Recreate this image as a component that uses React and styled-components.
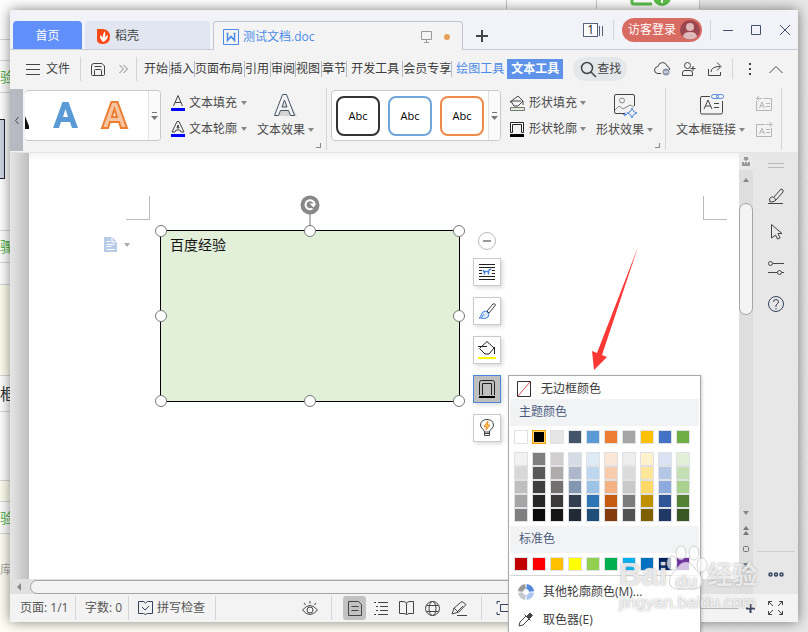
import React from "react";
import styled, { createGlobalStyle } from "styled-components";

const Global = createGlobalStyle`
  * { box-sizing: border-box; }
  body { margin: 0; font: 12px/16px "Open Sans", "Noto Sans CJK SC", sans-serif; color: #444; }
  button { font: inherit; color: inherit; background: none; border: 0; padding: 0; margin: 0; white-space: nowrap; }
  svg { display: block; flex: none; overflow: visible; }
`;

/* ---------- desktop behind the window ---------- */
const Desktop = styled.div`
  position: relative; min-height: 100vh; padding: 10px; overflow: hidden; display: flex;
`;
const Backdrop = styled.div`
  position: absolute; inset: 0; display: grid; grid-template-columns: 1fr 108px; background: #fffff6;
`;
const Wallpaper = styled.div`
  background: repeating-linear-gradient(45deg, #e5e5e5 0 1px, #e9e9e9 1px 3px);
`;
const PageBehind = styled.div`display: flex; flex-direction: column;`;
const BehindRow = styled.div`
  flex: none; height: ${p => p.$h}px; background: ${p => p.$bg || "#fff"};
  border-bottom: 1px solid ${p => p.$line || "#d8d8d8"}; display: flex; align-items: center;
`;
const Clip = styled.span`
  width: 10px; overflow: hidden; white-space: nowrap; line-height: 20px;
  color: ${p => p.$color}; font-size: ${p => p.$size || 14}px;
`;
const Thumb = styled.span`width: 5px; height: 60px; border: 1px solid #223; border-left: 0; background: #cdd5e2;`;
const Columns = styled.div`
  width: 100%; height: 100%; display: grid; grid-template-columns: 507px 90px 1fr;
  > * { border-right: 1px solid #c8c8c8; }
`;
const Badge = styled.div`padding-left: 33px; overflow: hidden;`;

/* ---------- window ---------- */
const Window = styled.main`
  position: relative; flex: 1; min-width: 0; display: flex; flex-direction: column;
  background: #f3f3f3; box-shadow: 0 0 12px rgba(0,0,0,.5);
`;
const TitleBar = styled.header`
  height: 40px; flex: none; display: flex; align-items: flex-end; padding-left: 3px;
  background: #f2f3f8; border-bottom: 1px solid #c8cdd8;
`;
const Tab = styled.button`
  height: 28px; width: ${p => p.$w}px; display: flex; align-items: center; gap: 5px; margin-right: 3px;
  padding: 2px 0 0 12px; border-radius: 4px 4px 0 0; background: #e1e6f0;
`;
const HomeTab = styled(Tab)`background: #618ffb; color: #fff; justify-content: center; padding: 2px 0 0;`;
const ActiveTab = styled(Tab)`
  height: 29px; margin: 0 0 -1px; padding: 2px 12px 0 9px; gap: 4px; background: #f4f4f4; color: #4b8bea;
  border: 1px solid #bfc5d3; border-bottom: 0;
`;
const Spacer = styled.span`flex: 1;`;
const Gap = styled.span`flex: none; width: ${p => p.$w}px;`;
const Dot = styled.span`width: 6px; height: 6px; border-radius: 50%; background: #e8a158; margin-left: 8px;`;
const NewTab = styled.button`height: 28px; margin-left: 13px;`;
const WindowTools = styled.div`height: 39px; display: flex; align-items: center; padding-right: 8px;`;
const Counter = styled.button`
  width: 21px; height: 14px; display: flex; color: #112; line-height: 12px;
  > b { width: 17px; height: 14px; border: 1px solid #56617e; font-weight: 400; background: #fff; }
  > i { width: 2px; height: 10px; margin: 3px 0 0 1px; border-left: 1px solid #56617e; }
`;
const Rule = styled.span`flex: none; width: 1px; height: ${p => p.$h || 20}px; background: #d4d6dc;`;
const Login = styled.button`
  width: 80px; height: 24px; border-radius: 12px; background: #d96c62; color: #fff;
  display: flex; align-items: center; justify-content: space-between; padding: 0 2px 0 6px;
`;

/* ---------- menu row ---------- */
const MenuBar = styled.nav`height: 38px; flex: none; display: flex; align-items: center; padding: 0 15px 0 16px;`;
const FileButton = styled.button`display: flex; align-items: center; gap: 6px; margin-right: 10px;`;
const MenuItem = styled.button`
  height: 16px; flex: none; padding: 0 ${p => p.$r || 0}px 0 ${p => p.$l || 0}px;
  border-right: 1px solid ${p => (p.$plain ? "transparent" : "#b4bac8")};
  color: ${p => (p.$accent ? "#4b8bea" : "#3c3c3c")};
`;
const SelectedItem = styled.button`height: 20px; width: 56px; margin: 0 10px 0 2px; background: #5f93ea; color: #fff; font-weight: 700;`;
const Find = styled.button`
  width: 54px; height: 24px; border-radius: 12px; background: #e5e8ea;
  display: flex; align-items: center; gap: 1px; padding-left: 8px;
`;

/* ---------- ribbon ---------- */
const Ribbon = styled.section`
  height: 65px; flex: none; display: flex; align-items: flex-start; border-bottom: 1px solid #e4e4e4;
`;
const Collapse = styled.button`width: 13px; height: 62px; margin-top: 1px; background: #b7bac2; display: grid; place-items: center;`;
const Gallery = styled.div`
  height: 51px; margin-top: 2px; display: flex; align-items: center; background: #fff; overflow: hidden;
  border: 1px solid #c9c9c9; border-radius: 4px; padding-left: ${p => p.$l || 0}px;
  border-left-width: ${p => (p.$open ? 0 : 1)}px;
`;
const GalleryMore = styled.button`
  width: 12px; height: 49px; margin-left: ${p => p.$l}px; border-left: 1px solid #e2e2e2; background: #fafafa;
  display: grid; place-items: center;
`;
const StyleTile = styled.button`
  width: 44px; height: 40px; margin-right: 8px; border: 2px solid ${p => p.$c}; border-radius: 8px;
  background: #fff; color: #000; font: 11px/16px "Open Sans", sans-serif;
  &:nth-child(3) { margin-right: 0; }
`;
const CommandPair = styled.div`display: flex; flex-direction: column; gap: 6px; padding-top: 5px;`;
const Command = styled.button`
  height: 20px; display: flex; align-items: center; gap: ${p => p.$gap || 4}px; color: #4a4a4a;
`;
const BigCommand = styled.button`
  padding-top: 6px; display: flex; flex-direction: column; align-items: center; gap: 5px; color: #4a4a4a;
`;
const BigLabel = styled.span`display: flex; align-items: center; gap: 3px;`;
const Corner = styled.i`width: 5px; height: 5px; margin: 55px 5px 0 2px; border: solid #888; border-width: 0 1px 1px 0;`;

/* ---------- document ---------- */
const Workspace = styled.section`flex: 1; display: flex; min-height: 441px;`;
const DocColumn = styled.div`flex: 1; min-width: 0; display: flex; flex-direction: column;`;
const Canvas = styled.div`flex: 1; display: flex;`;
const Gutter = styled.div`width: 19px; background: linear-gradient(90deg, #e6e6e6, #bfbfbf);`;
const Paper = styled.div`position: relative; flex: 1; background: linear-gradient(#f4f4f4, #fff 8px);`;
const Margin = styled.i`
  position: absolute; top: 43px; left: ${p => p.$x}px; width: 24px; height: 24px; border: solid #bbb;
  border-width: ${p => (p.$right ? "0 0 1px 1px" : "0 1px 1px 0")};
`;
const ParagraphTool = styled.button`position: absolute; left: 75px; top: 84px; display: flex; align-items: center; gap: 6px;`;
const TextBox = styled.div`
  position: absolute; left: 131px; top: 77px; width: 300px; height: 172px; background: #e2efd9;
  border: 1px solid #000; padding: 4px 9px; color: #111; font-size: 14px; line-height: 20px;
`;
const Handle = styled.i`
  position: absolute; left: ${p => p.$x}; top: ${p => p.$y}; width: 12px; height: 12px; margin: -6px;
  border-radius: 50%; background: #fff; border: 1px solid #777;
`;
const Rotate = styled.button`position: absolute; left: 50%; bottom: 100%; transform: translateX(-50%);`;
const FloatTools = styled.div`
  position: absolute; left: 444px; top: 79px; display: flex; flex-direction: column; align-items: center; gap: 11px;
  > :first-child { margin-bottom: -3px; }
`;
const FloatButton = styled.button`
  width: 28px; height: 28px; display: grid; place-items: center; box-shadow: 2px 2px 4px rgba(0,0,0,.14);
  background: ${p => (p.$on ? "#bfbfbf" : "#fff")}; border: 1px solid ${p => (p.$on ? "#4a86d8" : "#cacaca")};
`;
const HScroll = styled.div`height: 15px; flex: none; display: flex; align-items: center; gap: 8px; padding-left: 6px; background: #e0e0e0;`;
const HThumb = styled.span`flex: 0 1 640px; height: 14px; border: 1px solid #a5a5a5; border-radius: 7px; background: #f4f4f4;`;
const VScroll = styled.div`width: 14px; flex: none; display: flex; flex-direction: column; align-items: center; background: #dedede; padding-bottom: 22px; gap: 11px;`;
const Splitter = styled.span`width: 14px; height: 17px; margin-bottom: -3px; background: #e9e9e9; display: grid; place-items: center;`;
const VThumb = styled.span`width: 14px; height: 112px; margin-top: 10px; border: 1px solid #a5a5a5; border-radius: 7px; background: #f4f4f4;`;
const SideBar = styled.aside`
  width: 45px; flex: none; display: flex; flex-direction: column; align-items: center; gap: 20px;
  padding: 10px 0 17px; background: #e7e7e7;
`;
const SideLine = styled.i`width: 38px; height: 1px; background: #cfcfcf;`;

/* ---------- status bar ---------- */
const StatusBar = styled.footer`height: 28px; flex: none; display: flex; align-items: center; padding: 0 15px 0 10px; color: #555;`;
const StatusText = styled.span`white-space: nowrap; width: ${p => p.$w}px;`;
const SpellButton = styled.button`display: flex; align-items: center; gap: 4px; margin: 0 10px 0 9px;`;
const ViewButton = styled.button`
  width: 23px; height: 24px; margin-right: 3px; display: grid; place-items: center; border-radius: 3px;
  background: ${p => (p.$on ? "#c2c2c2" : "transparent")};
`;
const Zoom = styled.input`
  appearance: none; width: 90px; height: 1px; margin: 0 8px 0 0; background: #bbb;
  &::-webkit-slider-thumb { appearance: none; width: 7px; height: 11px; background: #888; }
`;

/* ---------- colour menu ---------- */
const Menu = styled.div`
  position: absolute; z-index: 2; left: 479px; top: 222px; width: 193px; padding: 2px 1px 12px; background: #fff;
  border: 1px solid #a9a9a9; box-shadow: 1px 1px 3px rgba(0,0,0,.2); color: #3c3c3c;
`;
const MenuRow = styled.button`width: 100%; height: ${p => p.$h || 28}px; display: flex; align-items: center; gap: ${p => p.$gap || 10}px; padding-left: ${p => p.$l || 7}px;`;
const Heading = styled.h3`margin: 0; height: 27px; padding: 5px 9px; background: #f1f3f5; color: #4c5b7c; font: inherit;`;
const Swatches = styled.div`display: grid; grid-template-columns: repeat(10, 14px); column-gap: 4px; padding: ${p => p.$pad};`;
const Swatch = styled.button`
  width: 14px; height: 14px; background: ${p => p.$c}; border: 1px solid ${p => (p.$on ? "#f5a000" : "#e0e1e5")};
  box-shadow: ${p => (p.$on ? "inset 0 0 0 1px #ffd873" : "none")};
`;
const MenuLine = styled.hr`margin: 0; border: 0; border-top: 1px solid #d5d5d5;`;
const Pointer = styled.svg`position: absolute; left: 562px; top: 94px;`;

/* ---------- watermark ---------- */
const Watermark = styled.div`
  position: absolute; z-index: 3; left: 619px; top: 545px; pointer-events: none; color: rgba(255,255,255,.75);
  font-family: "Liberation Sans", "Noto Sans CJK SC", sans-serif; font-weight: 700; white-space: nowrap;
  text-shadow: 0 0 2px rgba(150,150,150,.9);
`;
const Brand = styled.div`display: flex; align-items: flex-end; height: 48px;`;
const BrandText = styled.span`font-size: ${p => p.$s}px; line-height: 36px; padding-left: ${p => p.$l || 0}px;`;
const Paw = styled.span`width: 37px; height: 48px; display: grid; > * { grid-area: 1 / 1; }`;
const PawText = styled.span`padding: 27px 0 0 8px; font-size: 18px; line-height: 20px;`;
const Site = styled.div`font-size: 17px; line-height: 20px; font-weight: 400;`;

const Ico = ({ w = 16, h = 16, c = "#444", sw = 1, fill = "none", children }) => (
  <svg width={w} height={h} viewBox={`0 0 ${w} ${h}`} fill={fill} stroke={c} strokeWidth={sw} aria-hidden="true">{children}</svg>
);
const Caret = ({ up, left, c = "#888" }) => (
  <Ico w={6} h={4} c="none" fill={c}>
    <path d={left ? "M5-2v8L1 2z" : up ? "M0 4h6L3 0z" : "M0 0h6L3 4z"} />
  </Ico>
);
const More = () => <Ico w={7} h={8} c="#777"><path d="M1 .5h5" /><path d="M0 4h7L3.500 8z" fill="#777" stroke="none" /></Ico>;

const theme = ["#fff", "#000", "#e7e6e6", "#44546a", "#5b9bd5", "#ed7d31", "#a5a5a5", "#ffc000", "#4472c4", "#70ad47"];
const tints = [
  ["#f2f2f2", "#7f7f7f", "#d0cece", "#d6dce5", "#deebf7", "#fbe5d6", "#ededed", "#fff2cc", "#dae3f3", "#e2f0d9"],
  ["#d8d8d8", "#595959", "#afabab", "#adb9ca", "#bdd7ee", "#f8cbad", "#dbdbdb", "#ffe699", "#b4c7e7", "#c5e0b4"],
  ["#bfbfbf", "#3f3f3f", "#757070", "#8497b0", "#9dc3e6", "#f4b183", "#c9c9c9", "#ffd966", "#8faadc", "#a9d18e"],
  ["#a5a5a5", "#262626", "#3a3838", "#333f50", "#2e75b6", "#c55a11", "#7b7b7b", "#bf9000", "#2f5597", "#548235"],
  ["#7f7f7f", "#0c0c0c", "#171616", "#222a35", "#1f4e79", "#843c0c", "#525252", "#7f6000", "#203864", "#385723"],
];
const standard = ["#c00000", "#f00", "#ffc000", "#ff0", "#92d050", "#00b050", "#00b0f0", "#0070c0", "#002060", "#7030a0"];

function Behind() {
  return (
    <Backdrop aria-hidden="true">
      <PageBehind>
        <BehindRow $h={10} $line="#fff"><Columns><i /><i /><Badge>
          <Ico w={40} h={8} c="#5bc04a" sw={3}><path d="M2-4V2Q2 4 4 4H22" /><circle cx="32" cy="-3" r="9" fill="#5bc04a" stroke="none" /><path d="M32-5V3" stroke="#fff" strokeWidth="2" /></Ico>
        </Badge></Columns></BehindRow>
        <BehindRow $h={30} />
        <BehindRow $h={21} />
        <BehindRow $h={32}><Clip $color="#4fb548">验</Clip></BehindRow>
        <BehindRow $h={112} $line="#fff"><Thumb /></BehindRow>
        <BehindRow $h={26} />
        <BehindRow $h={32}><Clip $color="#4fb548">骤</Clip></BehindRow>
        <BehindRow $h={22} />
        <BehindRow $h={91} $bg="#fffff0" />
        <BehindRow $h={36}><Clip $color="#333" $size={16}>框</Clip></BehindRow>
        <BehindRow $h={69} />
        <BehindRow $h={21} $bg="#fffff0" />
        <BehindRow $h={32}><Clip $color="#4fb548">验</Clip></BehindRow>
        <BehindRow $h={72} $bg="#fffff6" $line="#fffff6"><Clip $color="#aaa" $size={12}>库</Clip></BehindRow>
      </PageBehind>
      <Wallpaper />
    </Backdrop>
  );
}

function Title() {
  return (
    <TitleBar>
      <HomeTab $w={69}>首页</HomeTab>
      <Tab $w={125}>
        <Ico w={13} h={15} c="none"><path d="M0 0H6Q13 1 13 7.500Q13 15 6 15Q0 15 0 11z" fill="#fb4a16" /><path d="M6 13Q2 9 3.500 6Q6 8 6 10Q5 6 8 2Q9 6 7.500 10Q8 7 11 6Q11 11 6 13" fill="#fff" /></Ico>
        稻壳
      </Tab>
      <ActiveTab $w={250}>
        <Ico w={16} h={16} c="#4b8bea"><path d="M.5.5h15v15H.5z" /><path d="M3.500 4.500h2M10.500 4.500h2M4.500 4.500v7L8 7.500l3.500 4v-7" strokeWidth="1.500" /></Ico>
        测试文档.doc
        <Spacer />
        <Ico w={11} h={12} c="#999"><path d="M.5.5h10v8H.5zM5.500 8.500v3M3 11.500h5" /></Ico>
        <Dot />
      </ActiveTab>
      <NewTab aria-label="新建标签"><Ico w={12} h={28} c="#444" sw={2}><path d="M6 9v12M0 15h12" /></Ico></NewTab>
      <Spacer />
      <WindowTools>
        <Counter><b>1</b><i /><i /></Counter>
        <Gap $w={9} /><Rule /><Gap $w={8} />
        <Login>访客登录
          <Ico w={20} h={20} c="none"><circle cx="10" cy="10" r="10" fill="#9c4750" /><circle cx="10" cy="7" r="4" fill="#e0b9bb" /><path d="M3 17Q3 12 10 12Q17 12 17 17Q10 22 3 17" fill="#e0b9bb" /></Ico>
        </Login>
        <Gap $w={8} /><Rule /><Gap $w={12} />
        <button aria-label="最小化"><Ico w={10} h={10} c="#44516e"><path d="M0 5.500h10" /></Ico></button><Gap $w={18} />
        <button aria-label="最大化"><Ico w={10} h={10} c="#44516e"><path d="M.5.5h9v9h-9z" /></Ico></button><Gap $w={19} />
        <button aria-label="关闭"><Ico w={10} h={10} c="#44516e"><path d="M0 0l10 10M10 0L0 10" /></Ico></button>
      </WindowTools>
    </TitleBar>
  );
}

function TopMenu() {
  return (
    <MenuBar>
      <FileButton><Ico w={14} h={11}><path d="M0 .5h14M0 5.500h14M0 10.500h14" /></Ico>文件</FileButton>
      <Rule $h={24} /><Gap $w={10} />
      <button aria-label="保存"><Ico w={14} h={13}><path d="M.5 3Q.5.500 3 .5h8l2.500 2.500v8.500q0 1-1 1h-11q-1 0-1-1zM3.500 3.500h7M3.500 12V7.500q0-1 1-1h5q1 0 1 1V12" /></Ico></button>
      <Gap $w={14} /><Ico w={9} h={8} c="#888"><path d="M.5 0l4 4l-4 4M4.500 0l4 4l-4 4" /></Ico><Gap $w={8} />
      <Rule $h={24} /><Gap $w={7} />
      <MenuItem $r={1}>开始</MenuItem><MenuItem>插入</MenuItem><MenuItem $r={1}>页面布局</MenuItem>
      <MenuItem $r={1}>引用</MenuItem><MenuItem>审阅</MenuItem><MenuItem $r={1}>视图</MenuItem><MenuItem>章节</MenuItem>
      <MenuItem $l={4} $r={3}>开发工具</MenuItem><MenuItem>会员专享</MenuItem>
      <MenuItem $l={4} $accent $plain>绘图工具</MenuItem>
      <SelectedItem>文本工具</SelectedItem>
      <Find><Ico w={15} h={15} sw={1.5}><circle cx="6" cy="6" r="5.500" /><path d="M10 10l5 5" /></Ico>查找</Find>
      <Spacer />
      <button aria-label="云"><Ico w={17} h={14}><path d="M7 11.500H4Q.5 11.500.5 8Q.5 5 4 4.500Q5 .5 8.500.5Q12 .5 13 4Q16 5 15.500 8" /><circle cx="12" cy="10" r="3.500" fill="#8e98ae" stroke="none" /><path d="M10 10h4" stroke="#fff" /></Ico></button><Gap $w={11} />
      <button aria-label="协作"><Ico w={14} h={14}><circle cx="5.500" cy="3.500" r="3" /><path d="M.5 13.500V11Q.5 8.500 3 8.500h5q2.500 0 2.500 2.500v2.500zM8.500 6.500h5M11 4v5" /></Ico></button><Gap $w={12} />
      <button aria-label="分享"><Ico w={14} h={14}><path d="M.5 7v6.500h12V10M3 10Q3 4.500 12 4.500M9 .5l4 4l-4 4" /></Ico></button><Gap $w={10} />
      <Rule $h={20} /><Gap $w={16} />
      <Ico w={2} h={12} c="none" fill="#444"><path d="M0 0h2v2H0zM0 5h2v2H0zM0 10h2v2H0z" /></Ico><Gap $w={18} />
      <button aria-label="收起"><Ico w={14} h={7}><path d="M.5 7L7 .5L13.500 7" /></Ico></button>
    </MenuBar>
  );
}

const BigA = "M0 26L9.500 0h6L25 26h-6l-2-6H8l-2 6zM10 15h5L12.500 7z";
function Tools() {
  return (
    <Ribbon>
      <Collapse aria-label="向左滚动"><Ico w={4} h={7}><path d="M3.500 0L.5 3.500L3.500 7" /></Ico></Collapse>
      <Gap $w={2} />
      <Gallery $open>
        <Ico w={4} h={26} c="none" fill="#111"><path d="M0 13l4 10v3H0z" /></Ico><Gap $w={24} />
        <Ico w={25} h={27} c="none" fill="#5b9bd5"><path d={BigA} /></Ico><Gap $w={24} />
        <Ico w={25} h={27} c="#ed7d31" sw={2} fill="#f6c4a0"><path d={BigA} /></Ico>
        <GalleryMore $l={21} aria-label="更多样式"><More /></GalleryMore>
      </Gallery>
      <Gap $w={10} />
      <CommandPair>
        <Command><Ico w={14} h={17}><path d="M2.500 11L7 .5L11.500 11M4 7.500h6" /><path d="M0 14.500h14" stroke="#00f" strokeWidth="3" /></Ico>文本填充<Caret /></Command>
        <Command><Ico w={14} h={17}><path d="M1 11L6 .5h2L13 11h-3L9 9H5l-1 2zM6 7h2L7 4z" /><path d="M0 14.500h14" stroke="#00f" strokeWidth="3" /></Ico>文本轮廓<Caret /></Command>
      </CommandPair>
      <Gap $w={10} />
      <BigCommand>
        <Ico w={23} h={23} c="#44546a"><path d="M4 22L13 4l10 18z" fill="#d5d5d5" stroke="none" /><path d="M.5 21.500L8.500.5h4L20.500 21.500h-4l-2-5h-8l-2 5zM8 13h5L10.500 6z" fill="#f3f3f3" /></Ico>
        <BigLabel>文本效果<Caret /></BigLabel>
      </BigCommand>
      <Corner /><Rule $h={62} /><Gap $w={4} />
      <Gallery $l={4}>
        <StyleTile $c="#333">Abc</StyleTile><StyleTile $c="#6ea6da">Abc</StyleTile><StyleTile $c="#ef8a48">Abc</StyleTile>
        <GalleryMore $l={4} aria-label="更多形状样式"><More /></GalleryMore>
      </Gallery>
      <Gap $w={8} />
      <CommandPair>
        <Command $gap={3}><Ico w={17} h={17}><path d="M1 7L9 1l5 5l-5 5H5L2.500 7zM2 6h10M14 6v4" /><path d="M1.500 12.500h14v3h-14z" fill="#dfecd5" stroke="#777" /></Ico>形状填充<Caret /></Command>
        <Command $gap={3}><Ico w={17} h={17} c="#222"><path d="M1.500 11.500v-10h13v10h-2v-8h-9v8z" fill="#fff" /><path d="M1 14.500h14" stroke="#000" strokeWidth="3" /></Ico>形状轮廓<Caret /></Command>
      </CommandPair>
      <Gap $w={10} />
      <BigCommand>
        <Ico w={24} h={23}><path d="M12 19.500H3Q1.500 19.500 1.500 18V2Q1.500.5 3 .5h17q1.500 0 1.500 1.500V12" /><circle cx="9" cy="6.500" r="2.500" stroke="#888" /><path d="M2 16l4-4l4 3l7-4l4 2" stroke="#888" /><path d="M19 14l1.500 3.500L24 19l-3.500 1.500L19 24l-1.500-3.500L14 19l3.500-1.500z" stroke="#5288df" fill="#f3f3f3" /><path d="M12 18.500v4M10 20.500h4" stroke="#5288df" /></Ico>
        <BigLabel>形状效果<Caret /></BigLabel>
      </BigCommand>
      <Corner /><Rule $h={62} /><Gap $w={10} />
      <BigCommand>
        <Ico w={24} h={23}><path d="M11 2.500H3Q1.500 2.500 1.500 4v14.500q0 1.500 1.500 1.500h19q1.500 0 1.500-1.500V7M5 15l4-9l4 9M6.500 12h5M15 9.500h5M15 13.500h5" /><rect x="12.500" y=".5" width="7" height="4" rx="2" stroke="#5288df" /><rect x="17.500" y=".5" width="7" height="4" rx="2" stroke="#5288df" /></Ico>
        <BigLabel>文本框链接<Caret /></BigLabel>
      </BigCommand>
      <Gap $w={11} />
      <CommandPair>
        <Command aria-label="前一文本框"><Ico w={17} h={15} c="#b5b5b5"><path d="M.5 5v9.500h15V2.500h-8M0 2.500h6M3 0L.5 2.500L3 5M3.500 12l2.500-6l2.500 6M4.500 10h3M10 7.500h4M10 10.500h4" /></Ico></Command>
        <Command aria-label="后一文本框"><Ico w={17} h={15} c="#b5b5b5"><path d="M9 2.500H.5v12h15V6M10 2.500h6M13.500 0L16 2.500L13.500 5M3.500 12l2.500-6l2.500 6M4.500 10h3M10 7.500h4M10 10.500h4" /></Ico></Command>
      </CommandPair>
      <Gap $w={8} /><Rule $h={62} />
    </Ribbon>
  );
}

function ColourMenu() {
  return (
    <Menu>
      <MenuRow $h={21}><Ico w={14} h={16} c="#333"><path d="M.5.5h13v15H.5z" /><path d="M1 15L13 1" stroke="#d35252" /></Ico>无边框颜色</MenuRow>
      <Heading>主题颜色</Heading>
      <Swatches $pad="4px 4px 8px">{theme.map((c, i) => <Swatch key={c} $c={c} $on={i === 1} aria-label={c} />)}</Swatches>
      <Swatches $pad="0 4px 4px">{tints.flat().map((c, i) => <Swatch key={i} $c={c} aria-label={c} />)}</Swatches>
      <Heading>标准色</Heading>
      <Swatches $pad="4px 4px 4px">{standard.map(c => <Swatch key={c} $c={c} aria-label={c} />)}</Swatches>
      <MenuLine />
      <MenuRow $h={32} $l={8} $gap={9}><Ico w={16} h={16} sw={5}><path d="M8.500 2.500A5.500 5.500 0 0 1 13.500 7.500" stroke="#5388e0" /><path d="M13.500 8.500A5.500 5.500 0 0 1 8.500 13.500" stroke="#adc8f0" /><path d="M7.500 13.500A5.500 5.500 0 0 1 2.500 8.500" stroke="#c5c8cc" /><path d="M2.500 7.500A5.500 5.500 0 0 1 7.500 2.500" stroke="#999" /></Ico>其他轮廓颜色(M)...</MenuRow>
      <MenuRow $h={24} $l={8} $gap={9}><Ico w={16} h={14}><path d="M1 13l1-4l6-6l3 3l-6 6zM6.500 1.500l6 6" /><path d="M9 3l3-3l2.500 2.500l-3 3z" fill="#444" /></Ico>取色器(E)</MenuRow>
    </Menu>
  );
}

function Document() {
  return (
    <Paper>
      <Margin $x={97} /><Margin $x={674} $right />
      <ParagraphTool aria-label="段落布局"><Ico w={14} h={16} c="#fff" fill="#b8cce8"><path d="M0 0h8l5 5v10H0z" stroke="none" /><path d="M8 0v5h5M2.500 4.500h4M2.500 7.500h8M2.500 9.500h5M2.500 12.500h8" /></Ico><Caret c="#aaa" /></ParagraphTool>
      <TextBox>
        百度经验
        <Rotate aria-label="旋转"><Ico w={20} h={36}><path d="M10 19v17" stroke="#777" /><circle cx="10" cy="10" r="9.500" fill="#888" stroke="none" /><path d="M12.500 13.500A4.500 4.500 0 1 1 14.500 9" stroke="#fff" strokeWidth="2" /><path d="M9.500 8.500h7l-3 4z" fill="#fff" stroke="none" /></Ico></Rotate>
        {["0%", "50%", "100%"].flatMap(y => ["0%", "50%", "100%"].map(x => (x === "50%" && y === "50%" ? null : <Handle key={x + y} $x={x} $y={y} />)))}
      </TextBox>
      <FloatTools>
        <button aria-label="收起工具"><Ico w={18} h={18} c="#bbb"><circle cx="9" cy="9" r="8.500" fill="#fff" /><path d="M5 9h8" stroke="#999" strokeWidth="2" /></Ico></button>
        <FloatButton aria-label="布局选项"><Ico w={16} h={18} c="#222"><path d="M0 1.500h16M0 4.500h16M0 7.500h3M13 7.500h3M0 10.500h3M13 10.500h3M0 13.500h16M0 16.500h16" /><path d="M4.500 7v1.500h5l1-2h2M5.500 8v3.500M9.500 8v3.500" stroke="#4b86dd" strokeWidth="1.500" /></Ico></FloatButton>
        <FloatButton aria-label="形状样式"><Ico w={18} h={17}><path d="M9 8l6-7q2-1 2.500 1L11 10z" /><path d="M1 15q2-1 2-3q1-4 5-4l3 3q0 4-4 4.500zM6 11l-3 4" fill="#d9e8fb" stroke="#4b86dd" /></Ico></FloatButton>
        <FloatButton aria-label="填充"><Ico w={18} h={18} c="#222"><path d="M9 .5l7 6.500l-5 6H7L1.500 7.500zM0 5.500h9M16.500 6v7" /><path d="M0 17h18" stroke="#ff0" strokeWidth="2" /></Ico></FloatButton>
        <FloatButton $on aria-label="轮廓"><Ico w={18} h={18} c="#222"><path d="M1.500 15V2.500Q1.500 .5 3.500 .5h11Q16.500 .5 16.500 2.500V15M4.500 15V3.500h9V15" /><path d="M1 17h16" stroke="#000" strokeWidth="2" /></Ico></FloatButton>
        <FloatButton aria-label="智能推荐"><Ico w={14} h={18}><path d="M4.500 13Q4.500 11 2.500 10Q.5 8 .5 6Q1 .5 7 .5T13.500 6Q13.500 8 11.500 10Q9.500 11 9.500 13zM4.500 13v3.500h5V13M4.500 14.500h5" /><path d="M8 2L4 7.500h2.500L6 11l4-5H7.500z" fill="#ffd24a" stroke="#ed8a31" /></Ico></FloatButton>
      </FloatTools>
      <ColourMenu />
      <Pointer width="50" height="130" viewBox="0 0 50 130"><path d="M47 0L11 108l5 2L3 123L1 104l5 2z" fill="#fa3937" /></Pointer>
    </Paper>
  );
}

function Side() {
  return (
    <SideBar>
      <Ico w={16} h={5} c="#bbb"><path d="M0 .5h16M0 4.500h16" /></Ico>
      <button aria-label="样式"><Ico w={16} h={16}><path d="M0 15.500h15M2 14L1.500 11Q3 8 5.500 9L8 12Q7 14 2 14M6 9l7-8l2 1v2l-7 8" /></Ico></button>
      <button aria-label="选择"><Ico w={14} h={16}><path d="M2.500.500L13 9.500H9l2 4.500l-2.500 1L6.500 11L2.500 14z" /></Ico></button>
      <button aria-label="属性"><Ico w={16} h={16}><circle cx="2.500" cy="3.500" r="2" /><path d="M5 3.500h11M0 12.500h9M14 12.500h2" /><circle cx="11.500" cy="12.500" r="2" /></Ico></button>
      <button aria-label="帮助"><Ico w={16} h={16} c="#35435e"><circle cx="8" cy="8" r="7.500" /><path d="M5.500 6Q5.500 3.500 8 3.500T10.500 6Q10.500 7 8 9v2M8 12v1.500" /></Ico></button>
      <Spacer /><SideLine />
      <button aria-label="更多"><Ico w={16} h={5} c="#35435e" sw={1.5}><circle cx="2.500" cy="2.500" r="1.500" /><circle cx="8" cy="2.500" r="1.500" /><circle cx="13.500" cy="2.500" r="1.500" /></Ico></button>
    </SideBar>
  );
}

function Status() {
  return (
    <StatusBar>
      <StatusText $w={55}>页面: 1/1</StatusText><Rule $h={24} /><Gap $w={9} />
      <StatusText $w={43}>字数: 0</StatusText><Rule $h={24} />
      <SpellButton><Ico w={15} h={14} c="#35435e"><path d="M.5.5h5l2 1.500l2-1.500h5v12h-5l-2 1l-2-1h-5zM4 6l3 3l4-4" /></Ico>拼写检查</SpellButton>
      <Rule $h={24} /><Gap $w={86} />
      <button aria-label="护眼模式"><Ico w={16} h={15}><path d="M.5 9Q8 0 15.500 9Q8 18 .5 9M2 2l1.500 2M8 0v2.500M14 2l-1.500 2" /><circle cx="8" cy="9" r="3" /></Ico></button>
      <Gap $w={13} /><Rule $h={24} /><Gap $w={11} />
      <ViewButton $on aria-label="页面视图"><Ico w={14} h={15}><path d="M.5.5h10l3 3v11H.5zM3.500 5.500h7M3.500 9.500h7" /></Ico></ViewButton>
      <ViewButton aria-label="大纲"><Ico w={14} h={14}><path d="M0 1.500h2M4 1.500h10M2 5.500h2M6 5.500h8M2 9.500h2M6 9.500h8M0 13.500h2M4 13.500h10" /></Ico></ViewButton>
      <ViewButton aria-label="阅读版式"><Ico w={15} h={14}><path d="M7.500 2Q6 .5 4 .5H.5v12h4.500q1.500 0 2.500 1.500q1-1.500 2.500-1.500h4.500V.5H11Q9 .5 7.500 2v11" /></Ico></ViewButton>
      <ViewButton aria-label="网页视图"><Ico w={15} h={15}><circle cx="7.500" cy="7.500" r="7" /><ellipse cx="7.500" cy="7.500" rx="3.500" ry="7" /><path d="M1.500 4.500h12M1.500 10.500h12" /></Ico></ViewButton>
      <ViewButton aria-label="写作模式"><Ico w={16} h={15}><path d="M1 13l2-6l8-6.500l4 3L8 11zM3 7l4 4M12 5l-5 5M6 14.500h10" /></Ico></ViewButton>
      <Gap $w={8} /><Rule $h={24} /><Gap $w={15} />
      <button aria-label="适应窗口"><Ico w={16} h={14} c="#35435e"><path d="M0 3V.5h3M12 .5h3V3M15 11v2.500h-3M3 13.500H0V11M3.500 3.500h8v7h-8z" /></Ico></button>
      <Spacer />
      <Zoom type="range" aria-label="缩放" defaultValue="20" />
      <button aria-label="放大"><Ico w={9} h={9} c="#35435e" sw={2}><path d="M4.500 0v9M0 4.500h9" /></Ico></button><Gap $w={13} />
      <button aria-label="全屏"><Ico w={15} h={14}><path d="M.5 4V.5H4M.5.5L5 5M11 .5h3.500V4M14.500.5L10 5M.5 10v3.500H4M.5 13.500L5 9M11 13.500h3.500V10M14.500 13.500L10 9" /></Ico></button>
    </StatusBar>
  );
}

export default function App() {
  return (
    <Desktop>
      <Global />
      <Behind />
      <Window>
        <Title />
        <TopMenu />
        <Tools />
        <Workspace>
          <DocColumn>
            <Canvas><Gutter /><Document /></Canvas>
            <HScroll><Caret left /><HThumb /></HScroll>
          </DocColumn>
          <VScroll>
            <Splitter><Ico w={8} h={9} c="none" fill="#999"><path d="M2 0h4v2h1L4 4L1 2h1zM0 5h2v1.500h1V5h2v1.500h1V5h2v4H0z" /></Ico></Splitter>
            <Caret up /><VThumb /><Spacer />
            <Caret />
            <Ico w={6} h={9} c="none" fill="#777"><path d="M0 4h6L3 0zM0 9h6L3 5z" /></Ico>
            <Ico w={6} h={6} c="#777"><rect x=".5" y=".5" width="5" height="5" rx="1" /></Ico>
            <Ico w={6} h={9} c="none" fill="#777"><path d="M0 0h6L3 4zM0 5h6L3 9z" /></Ico>
          </VScroll>
          <Side />
        </Workspace>
        <Status />
      </Window>
      <Watermark aria-hidden="true">
        <Brand><BrandText $s={31}>Bai</BrandText>
          <Paw>
            <Ico w={37} h={48} c="rgba(170,170,170,.5)" fill="rgba(255,255,255,.7)"><ellipse cx="5" cy="18" rx="5" ry="7" /><ellipse cx="14" cy="8" rx="5" ry="7" /><ellipse cx="27" cy="8" rx="5" ry="7" /><ellipse cx="35" cy="20" rx="5" ry="7" /><path d="M19 17Q25 17 29 25Q37 32 35 39Q32 46 19 44Q7 46 3 40Q0 32 9 25Q13 17 19 17" /></Ico>
            <PawText>du</PawText>
          </Paw>
          <BrandText $s={25} $l={3}>经验</BrandText>
        </Brand>
        <Site>jingyan.baidu.com</Site>
      </Watermark>
    </Desktop>
  );
}
